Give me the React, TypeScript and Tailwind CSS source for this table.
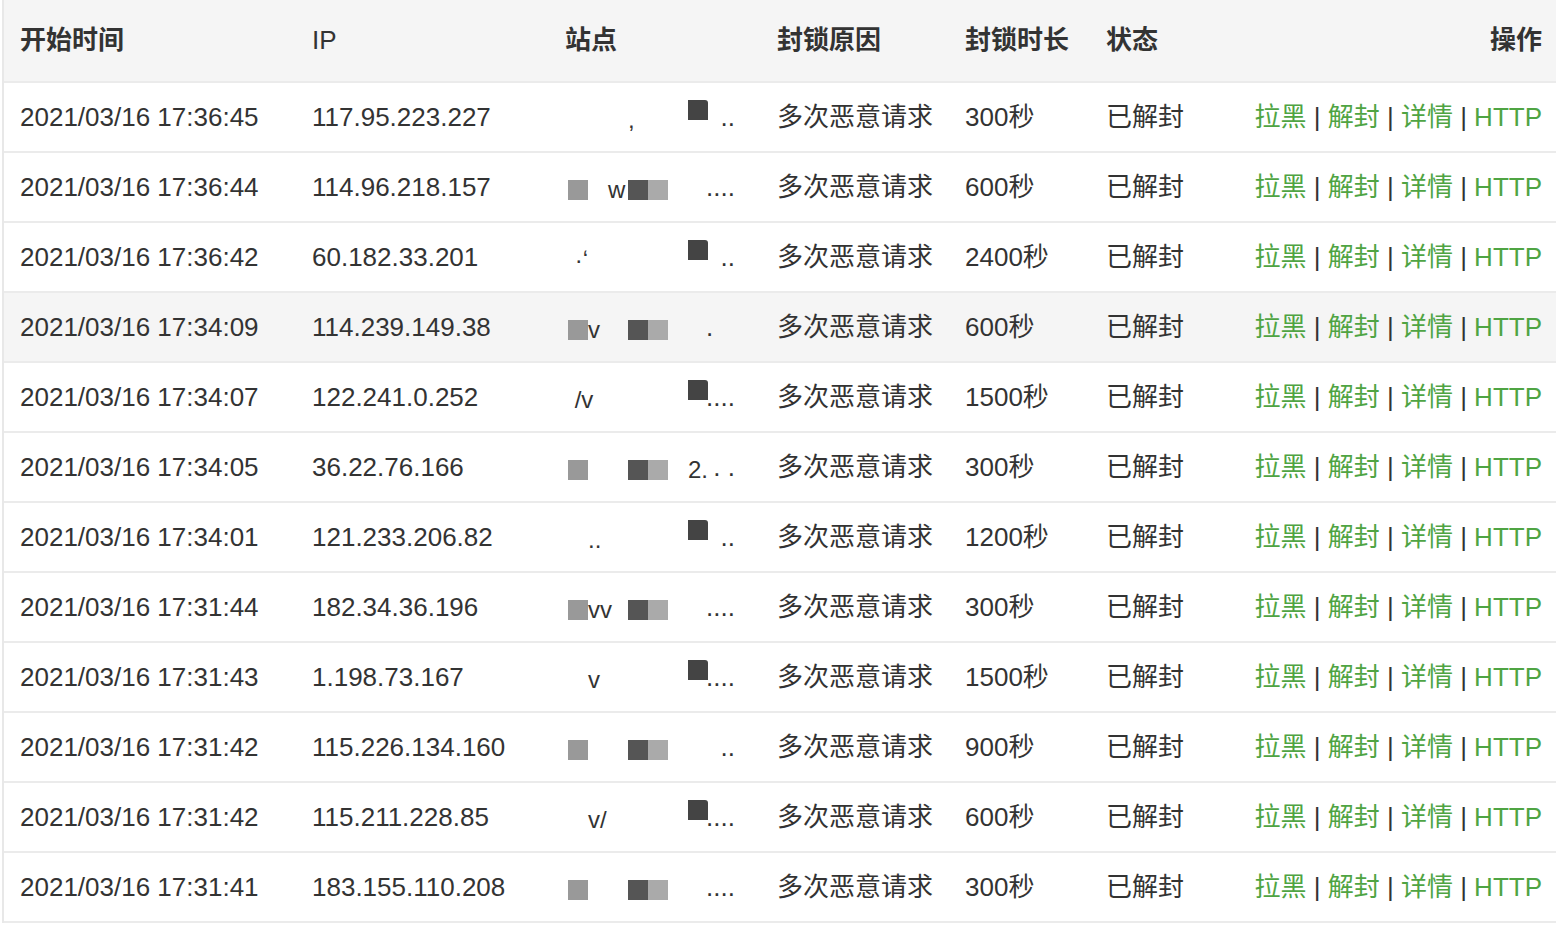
import React from 'react';

type Mosaic = 'a' | 'b';

interface BlockRow {
  time: string;
  ip: string;
  mosaic: Mosaic;
  dots: string;
  glyphs?: { col: string; text: string }[];
  duration: string;
  hover?: boolean;
}

const ROWS: BlockRow[] = [
  { time: '2021/03/16 17:36:45', ip: '117.95.223.227', mosaic: 'a', dots: '..', glyphs: [{ col: 'col-start-4', text: ',' }], duration: '300秒' },
  { time: '2021/03/16 17:36:44', ip: '114.96.218.157', mosaic: 'b', dots: '....', glyphs: [{ col: 'col-start-3', text: 'w' }], duration: '600秒' },
  { time: '2021/03/16 17:36:42', ip: '60.182.33.201', mosaic: 'a', dots: '..', glyphs: [{ col: 'col-start-1', text: ' ·\u02bb' }], duration: '2400秒' },
  { time: '2021/03/16 17:34:09', ip: '114.239.149.38', mosaic: 'b', dots: '.   ', glyphs: [{ col: 'col-start-2', text: 'v' }], duration: '600秒', hover: true },
  { time: '2021/03/16 17:34:07', ip: '122.241.0.252', mosaic: 'a', dots: '....', glyphs: [{ col: 'col-start-1', text: ' /v' }], duration: '1500秒' },
  { time: '2021/03/16 17:34:05', ip: '36.22.76.166', mosaic: 'b', dots: '. .', glyphs: [{ col: 'col-start-7', text: '2.' }], duration: '300秒' },
  { time: '2021/03/16 17:34:01', ip: '121.233.206.82', mosaic: 'a', dots: '..', glyphs: [{ col: 'col-start-2', text: '..' }], duration: '1200秒' },
  { time: '2021/03/16 17:31:44', ip: '182.34.36.196', mosaic: 'b', dots: '....', glyphs: [{ col: 'col-start-2', text: 'vv' }], duration: '300秒' },
  { time: '2021/03/16 17:31:43', ip: '1.198.73.167', mosaic: 'a', dots: '....', glyphs: [{ col: 'col-start-2', text: 'v' }], duration: '1500秒' },
  { time: '2021/03/16 17:31:42', ip: '115.226.134.160', mosaic: 'b', dots: '..', duration: '900秒' },
  { time: '2021/03/16 17:31:42', ip: '115.211.228.85', mosaic: 'a', dots: '....', glyphs: [{ col: 'col-start-2', text: 'v/' }], duration: '600秒' },
  { time: '2021/03/16 17:31:41', ip: '183.155.110.208', mosaic: 'b', dots: '....', duration: '300秒' },
];

const COLS = 'grid grid-cols-[292px_253px_212px_188px_141px_1fr]';

function SiteMosaic({ row }: { row: BlockRow }) {
  return (
    <div className="flex items-center">
      <div className="mt-[6px] grid h-[40px] w-[140px] grid-cols-[repeat(7,20px)] grid-rows-[repeat(4,10px)]">
        {row.mosaic === 'a' ? (
          <div className="col-start-7 row-start-1 row-span-2 rounded-tr-[3px] bg-[#444]" />
        ) : (
          <>
            <div className="col-start-1 row-start-2 row-span-2 bg-[#999]" />
            <div className="col-start-4 row-start-2 row-span-2 bg-[#555]" />
            <div className="col-start-5 row-start-2 row-span-2 bg-[#aaa]" />
          </>
        )}
        {row.glyphs?.map((g, i) => (
          <span
            key={i}
            className={`${g.col} row-start-2 row-span-2 whitespace-pre text-[24px] leading-[20px] text-[#333]`}
          >
            {g.text}
          </span>
        ))}
      </div>
      <span className="-ml-[2px] flex w-[29px] justify-end whitespace-pre text-[26px] text-[#333]">{row.dots}</span>
    </div>
  );
}

export default function App() {
  return (
    <div className="min-h-[932px] w-[1556px] bg-white pl-[2px] font-['Liberation_Sans','Noto_Sans_CJK_SC',sans-serif]">
      <div className="border-l-2 border-[#e8e8e8]">
        <div className={`${COLS} h-[83px] items-center border-b-2 border-[#ebebeb] bg-[#f5f5f5] text-[26px] font-bold text-[#333]`}>
          <div className="pl-4">开始时间</div>
          <div className="pl-4 font-normal">IP</div>
          <div className="pl-4">站点</div>
          <div className="pl-4">封锁原因</div>
          <div className="pl-4">封锁时长</div>
          <div className="flex justify-between pl-4 pr-[14px]">
            <span>状态</span>
            <span>操作</span>
          </div>
        </div>

        {ROWS.map((row, i) => (
          <div
            key={i}
            className={`${COLS} h-[70px] items-center border-b-2 border-[#ebebeb] text-[26px] text-[#333] ${row.hover ? 'bg-[#f5f5f5]' : 'bg-white'}`}
          >
            <div className="pl-4">{row.time}</div>
            <div className="pl-4">{row.ip}</div>
            <div className="pl-[19px]">
              <SiteMosaic row={row} />
            </div>
            <div className="pl-4">多次恶意请求</div>
            <div className="pl-4">{row.duration}</div>
            <div className="flex items-center justify-between pl-4 pr-[14px]">
              <span>已解封</span>
              <span className="whitespace-pre">
                <a className="text-[#4fa443]">拉黑</a> | <a className="text-[#4fa443]">解封</a> |{' '}
                <a className="text-[#4fa443]">详情</a> | <a className="text-[#4fa443]">HTTP</a>
              </span>
            </div>
          </div>
        ))}
      </div>
    </div>
  );
}
